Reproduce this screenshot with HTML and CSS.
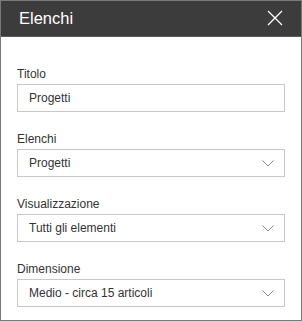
FILE: index.html
```html
<!DOCTYPE html>
<html lang="it">
<head>
<meta charset="utf-8">
<title>Elenchi</title>
<link rel="stylesheet" href="styles.css">
</head>
<body>
<div class="panel">
  <div class="header">
    <span class="title">Elenchi</span>
    <svg class="close" width="16" height="16" viewBox="0 0 16 16"><path d="M1 1L15 15M15 1L1 15" stroke="#fff" stroke-width="1.3" fill="none"/></svg>
  </div>
  <div class="content">
    <div class="field">
      <div class="label">Titolo</div>
      <div class="input">Progetti</div>
    </div>
    <div class="field">
      <div class="label">Elenchi</div>
      <div class="input select"><span>Progetti</span><svg class="chev" width="12" height="7" viewBox="0 0 12 7"><path d="M0.5 0.5L6 6L11.5 0.5" stroke="#8a8a8a" stroke-width="1" fill="none"/></svg></div>
    </div>
    <div class="field">
      <div class="label">Visualizzazione</div>
      <div class="input select"><span>Tutti gli elementi</span><svg class="chev" width="12" height="7" viewBox="0 0 12 7"><path d="M0.5 0.5L6 6L11.5 0.5" stroke="#8a8a8a" stroke-width="1" fill="none"/></svg></div>
    </div>
    <div class="field">
      <div class="label">Dimensione</div>
      <div class="input select"><span>Medio - circa 15 articoli</span><svg class="chev" width="12" height="7" viewBox="0 0 12 7"><path d="M0.5 0.5L6 6L11.5 0.5" stroke="#8a8a8a" stroke-width="1" fill="none"/></svg></div>
    </div>
  </div>
</div>
</body>
</html>
```
FILE: styles.css
```css
html, body {
  margin: 0;
  padding: 0;
  background: #fff;
}
body {
  font-family: "Liberation Sans", Arial, sans-serif;
  color: #333;
}
.panel {
  box-sizing: border-box;
  width: 302px;
  height: 321px;
  border: 1px solid #7a7a7a;
  background: #fff;
}
.header {
  box-sizing: border-box;
  height: 36px;
  background: #3c3c3c;
  border-bottom: 1px solid #5c5c5c;
  display: flex;
  align-items: center;
  justify-content: space-between;
  padding: 0 18px 1px 18px;
}
.title {
  color: #fff;
  font-size: 16.5px;
}
.close {
  display: block;
}
.content {
  padding: 27px 16px 0 16px;
  display: flex;
  flex-direction: column;
  gap: 17px;
}
.label {
  font-size: 12px;
  line-height: 20px;
  height: 20px;
  color: #333;
}
.input {
  box-sizing: border-box;
  height: 28px;
  border: 1px solid #c8c8c8;
  padding: 0 10px 0 11px;
  font-size: 12px;
  line-height: 26px;
  color: #333;
}
.select {
  display: flex;
  align-items: center;
  justify-content: space-between;
}
.chev {
  display: block;
}
```
